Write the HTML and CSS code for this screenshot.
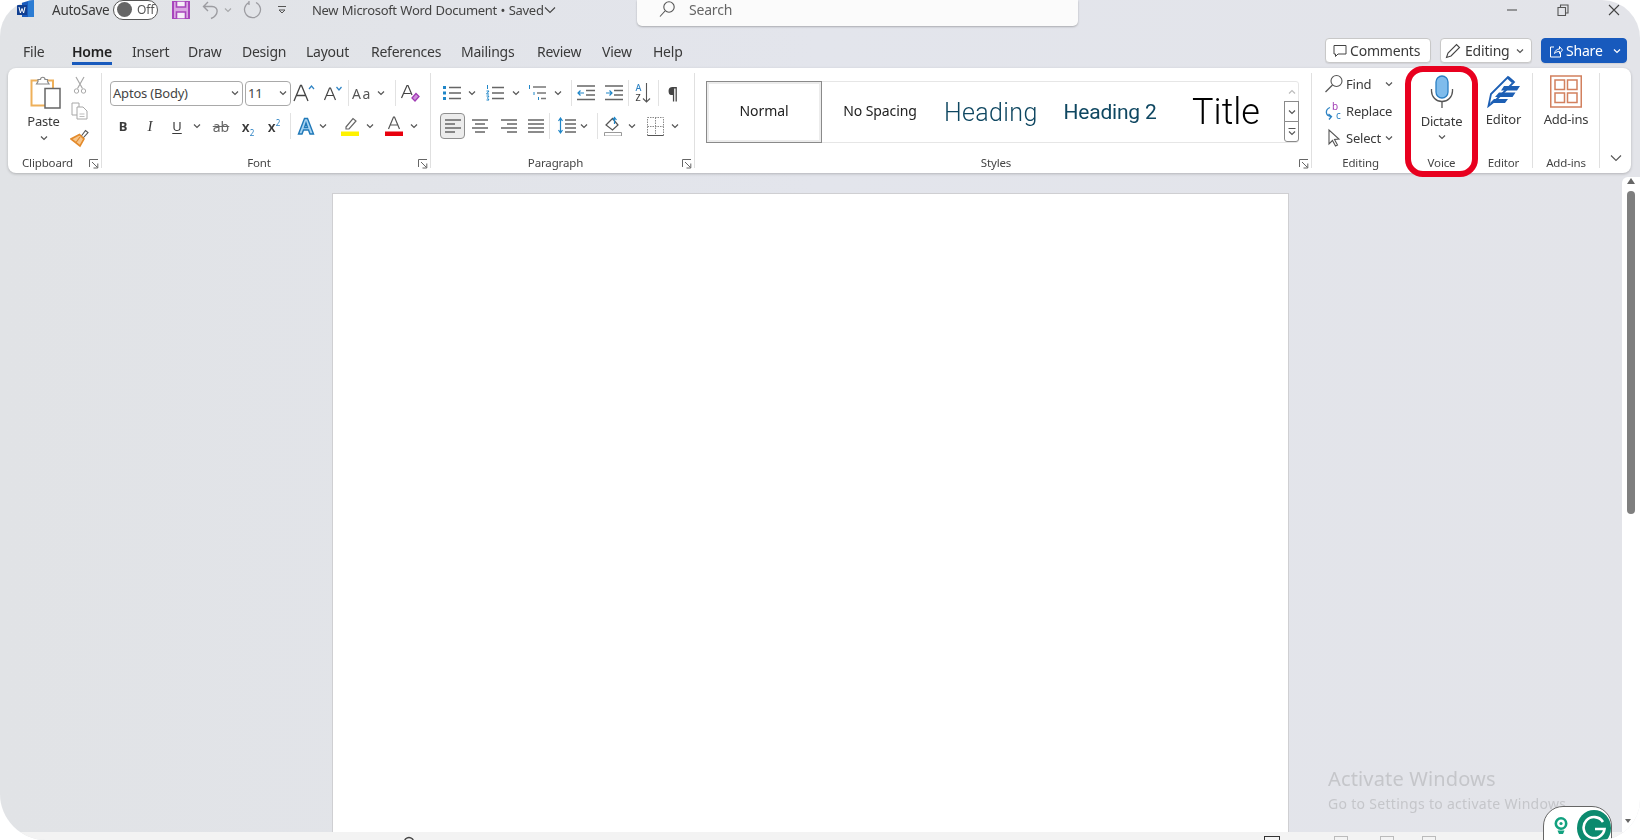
FILE: index.html
```html
<!DOCTYPE html>
<html lang="en">
<head>
<meta charset="utf-8">
<title>New Microsoft Word Document</title>
<link rel="stylesheet" href="styles.css">
</head>
<body>
<svg class="defs" width="0" height="0" aria-hidden="true">
  <symbol id="chev" viewBox="0 0 10 10"><path d="M2 3.5 5 6.5 8 3.5" fill="none" stroke="#555" stroke-width="1.2"/></symbol>
  <symbol id="launch" viewBox="0 0 10 10"><path d="M.5 8V.5H9M3 3 8.5 8.5M8.8 4.5V9H4.5" fill="none" stroke="#666" stroke-width="1"/></symbol>
  <symbol id="al" viewBox="0 0 18 16"><path d="M1 2H17M1 6H11M1 10H17M1 14H11" stroke="#666" stroke-width="1.4"/></symbol>
  <symbol id="ac" viewBox="0 0 18 16"><path d="M1 2H17M4 6H14M1 10H17M4 14H14" stroke="#666" stroke-width="1.4"/></symbol>
  <symbol id="ar" viewBox="0 0 18 16"><path d="M1 2H17M7 6H17M1 10H17M7 14H17" stroke="#666" stroke-width="1.4"/></symbol>
  <symbol id="aj" viewBox="0 0 18 16"><path d="M1 2H17M1 6H17M1 10H17M1 14H17" stroke="#666" stroke-width="1.4"/></symbol>
</svg>
<div class="app">
  <header class="titlebar">
    <div class="qat">
      <svg class="word" width="18" height="18" viewBox="0 0 18 18"><path d="M5 0H17V17H5z" fill="#185abd"/><path d="M11 0H17V17H11z" fill="#2b7cd3"/><path d="M0 5H10V15H0z" fill="#103f91"/><path d="M2 7 3.4 13 5 8.5 6.6 13 8 7" fill="none" stroke="#fff" stroke-width="1"/></svg>
      <span class="autosave">AutoSave</span>
      <span class="toggle"><i class="knob"></i><span class="off">Off</span></span>
      <svg class="save" width="18" height="18" viewBox="0 0 18 18"><path d="M1 0H17V18H1z" fill="#d9a6e2" stroke="#a845bc" stroke-width="2"/><path d="M4.500 0H13.500V6H4.500zM4.500 11H13.500V18H4.500z" fill="#f6eef8" stroke="#a845bc" stroke-width="1.600"/></svg>
      <svg class="undo" width="18" height="19" viewBox="0 0 18 19"><path d="M6 1 1.500 5.500 6 10M1.500 5.500H10C17 5.500 17 14 9 17.500" fill="none" stroke="#9c9ca1" stroke-width="1.400"/></svg>
      <svg class="undo-ch" width="10" height="10"><use href="#chev" opacity=".4"/></svg>
      <svg class="redo" width="19" height="18" viewBox="0 0 19 18"><path d="M13 1.500A8 8 0 1 1 6 1.500M6 0V4" fill="none" stroke="#9c9ca1" stroke-width="1.300"/></svg>
      <svg class="custom" width="10" height="10" viewBox="0 0 10 10"><path d="M1 1.500H9M2 5H8L5 8z" fill="none" stroke="#555" stroke-width="1"/></svg>
      <span class="doc-title">New Microsoft Word Document • Saved</span>
      <svg class="title-ch" width="14" height="14" viewBox="0 0 14 14"><path d="M2 4.500 7 9.500 12 4.500" fill="none" stroke="#444" stroke-width="1.100"/></svg>
    </div>
    <div class="search">
      <svg width="18" height="18" viewBox="0 0 18 18"><circle cx="11" cy="7" r="5.200" fill="none" stroke="#555" stroke-width="1.100"/><path d="M7 11 2 16.500" stroke="#555" stroke-width="1.100"/></svg>
      <span>Search</span>
    </div>
    <div class="winctl">
      <svg width="12" height="12" viewBox="0 0 12 12"><path d="M1 6H11" stroke="#555" stroke-width="1.100"/></svg>
      <svg width="12" height="12" viewBox="0 0 12 12"><path d="M1 3.500H8.500V11.500H1zM3.500 3.500V1H11V9H8.500" fill="none" stroke="#555" stroke-width="1.100"/></svg>
      <svg width="12" height="12" viewBox="0 0 12 12"><path d="M1 1 11 11M11 1 1 11" stroke="#444" stroke-width="1.100"/></svg>
    </div>
  </header>

  <nav class="tabsrow">
    <div class="tabs">
      <span class="tab t-file">File</span>
      <span class="tab active t-home">Home</span>
      <span class="tab t-insert">Insert</span>
      <span class="tab t-draw">Draw</span>
      <span class="tab t-design">Design</span>
      <span class="tab t-layout">Layout</span>
      <span class="tab t-refs">References</span>
      <span class="tab t-mail">Mailings</span>
      <span class="tab t-review">Review</span>
      <span class="tab t-view">View</span>
      <span class="tab t-help">Help</span>
    </div>
    <div class="actions">
      <span class="btn b-comments"><svg width="14" height="14" viewBox="0 0 14 14"><path d="M1 1.500H13V10H5L2.500 12.500V10H1z" fill="none" stroke="#444"/></svg>Comments</span>
      <span class="btn b-editing"><svg width="16" height="16" viewBox="0 0 16 16"><path d="M1.500 14.500 3 10 11.500 1.500 14.500 4.500 6 13z" fill="none" stroke="#444" stroke-width="1.100"/></svg>Editing<svg class="ch8" width="10" height="10"><use href="#chev"/></svg></span>
      <span class="btn b-share"><svg width="14" height="14" viewBox="0 0 14 14"><path d="M5 3H1.500V13H11.500V9M5.500 9.500C6 6.500 8 5 10.500 5V2.500L13.500 6 10.500 9.500V7.500C8.500 7.500 7 8 5.500 9.500Z" fill="none" stroke="#fff"/></svg>Share<svg class="ch-share" width="10" height="10" viewBox="0 0 10 10"><path d="M2 3.500 5 6.500 8 3.500" fill="none" stroke="#fff" stroke-width="1.200"/></svg></span>
    </div>
  </nav>

  <section class="ribbon">
    <div class="group g-clip">
      <div class="body clip-body">
        <div class="paste">
          <svg width="31" height="33" viewBox="0 0 31 33"><path d="M4 4.500H23V29.500H1.500V4.500z" fill="#fff" stroke="#eeb05a" stroke-width="2"/><path d="M8 5.500V3.500H10.500A2 2 0 0 1 15 3.500H17.500V5.500L19 8H6.500z" fill="#fff" stroke="#8a8a8a" stroke-width="1.200"/><path d="M15 12.500H30V32H15z" fill="#fff" stroke="#666" stroke-width="1.500"/></svg>
          <span class="paste-label">Paste</span>
          <svg class="paste-ch" width="10" height="10"><use href="#chev"/></svg>
        </div>
        <div class="clip-small">
          <svg width="14" height="18" viewBox="0 0 14 18"><path d="M3 1 9.500 12.500M11 1 4.500 12.500" stroke="#a8a8a8" stroke-width="1.200"/><circle cx="3.500" cy="15" r="2.200" fill="none" stroke="#a8a8a8"/><circle cx="10.500" cy="15" r="2.200" fill="none" stroke="#a8a8a8"/></svg>
          <svg width="18" height="18" viewBox="0 0 18 18"><path d="M1 1H8V13H1z" fill="#fff" stroke="#a8a8a8"/><path d="M6 5H12L16 9V17H6z" fill="#fff" stroke="#a8a8a8"/><path d="M8.500 12H13.500M8.500 14.500H13.500" stroke="#bdbdbd"/></svg>
          <svg width="20" height="20" viewBox="0 0 20 20"><path d="M11 8.500 15.500 2.500 18 4.500 13 10z" fill="#fff" stroke="#555" stroke-width="1.100"/><path d="M9.500 6.500 14 11 10 18 1 11z" fill="#f7c58a" stroke="#e38a2b" stroke-width="1.600"/><path d="M6 14.500 10 9" stroke="#e38a2b" stroke-width="1.200"/></svg>
        </div>
      </div>
      <div class="glabel"><span>Clipboard</span><svg width="10" height="10"><use href="#launch"/></svg></div>
    </div>

    <div class="group g-font">
      <div class="body">
        <div class="row pad8">
          <span class="select sel-font">Aptos (Body)<svg width="10" height="10"><use href="#chev"/></svg></span>
          <span class="select sel-size">11<svg width="10" height="10"><use href="#chev"/></svg></span>
          <span class="cell w26"><svg width="24" height="20" viewBox="0 0 24 20"><path d="M2 18 8.500 2.500H9.500L16 18M4.500 12.500H13.500" fill="none" stroke="#444" stroke-width="1.300"/><path d="M17 6 19.500 3 22 6" fill="none" stroke="#2e83c4" stroke-width="1.200"/></svg></span>
          <span class="cell w31"><svg width="20" height="18" viewBox="0 0 20 18"><path d="M1.500 16 6.500 4H7.500L12.500 16M3.500 11.500H10.500" fill="none" stroke="#444" stroke-width="1.200"/><path d="M13.500 3 16 6 18.500 3" fill="none" stroke="#2e83c4" stroke-width="1.200"/></svg></span>
          <i class="sep"></i>
          <span class="cell w26 aa">Aa</span>
          <span class="cell w12"><svg width="10" height="10"><use href="#chev"/></svg></span>
          <i class="sep ml8"></i>
          <span class="cell w28"><svg width="20" height="20" viewBox="0 0 20 20"><path d="M1.500 15 7 2.500H8L12 12M3.500 10.500H10.500" fill="none" stroke="#444" stroke-width="1.200"/><path d="M12 15 16 10.500 19 13.500 15 18z" fill="#d08fdc" stroke="#a03cb4" stroke-width="1.300"/></svg></span>
        </div>
        <div class="row row2 pad8">
          <span class="cell w26 tb">B</span>
          <span class="cell w28 ti">I</span>
          <span class="cell w26 tu">U</span>
          <span class="cell w14"><svg width="10" height="10"><use href="#chev"/></svg></span>
          <span class="cell w34 ts">ab</span>
          <span class="cell w20 tx"><span>x<sub>2</sub></span></span>
          <span class="cell w32 tx"><span>x<sup>2</sup></span></span>
          <i class="sep"></i>
          <span class="cell w24 ml3"><svg width="18" height="18" viewBox="0 0 18 18"><path d="M1.500 17 7.500 1.500H10.500L16.500 17H13L11.500 13H6.500L5 17zM7.500 10.500H10.500L9 6z" fill="#a8d4f2" stroke="#1f78b8" stroke-width="1.400"/></svg></span>
          <span class="cell w10"><svg width="10" height="10"><use href="#chev"/></svg></span>
          <span class="cell w28 ml8"><svg width="18" height="20" viewBox="0 0 18 20"><path d="M5 11 12 2.500 15 5 8 13H5z" fill="#fff" stroke="#666" stroke-width="1.200"/><path d="M0 15.500H18V20H0z" fill="#fff200"/></svg></span>
          <span class="cell w12"><svg width="10" height="10"><use href="#chev"/></svg></span>
          <span class="cell w28 ml4"><svg width="18" height="20" viewBox="0 0 18 20"><path d="M3.500 13 8.500 1H9.500L14.500 13M5.500 9H12.500" fill="none" stroke="#555" stroke-width="1.200"/><path d="M0 15.500H18V20H0z" fill="#e8000d"/></svg></span>
          <span class="cell w12"><svg width="10" height="10"><use href="#chev"/></svg></span>
        </div>
      </div>
      <div class="glabel"><span>Font</span><svg width="10" height="10"><use href="#launch"/></svg></div>
    </div>

    <div class="group g-para">
      <div class="body">
        <div class="row pad9">
          <span class="cell w24"><svg width="18" height="16" viewBox="0 0 18 16"><path d="M0 1H3V4H0zM0 6.500H3V9.500H0zM0 12H3V15H0z" fill="#1f86c8"/><path d="M6 2.500H18M6 8H18M6 13.500H18" stroke="#666" stroke-width="1.400"/></svg></span>
          <span class="cell w16"><svg width="10" height="10"><use href="#chev"/></svg></span>
          <span class="cell w30"><svg width="18" height="16" viewBox="0 0 18 16"><path d="M1.500 0V4M.5 6H3L.5 9H3M.5 11H3L1.500 13 3 15H.5" fill="none" stroke="#1f86c8"/><path d="M6 2.500H18M6 8H18M6 13.500H18" stroke="#666" stroke-width="1.400"/></svg></span>
          <span class="cell w12"><svg width="10" height="10"><use href="#chev"/></svg></span>
          <span class="cell w30"><svg width="18" height="16" viewBox="0 0 18 16"><path d="M1.500 0V4M6 7V10M10.500 12V15" stroke="#1f86c8"/><path d="M5 2H18M9 8H18M13 13.500H18" stroke="#777" stroke-width="1.300"/></svg></span>
          <span class="cell w12"><svg width="10" height="10"><use href="#chev"/></svg></span>
          <i class="sep ml7"></i>
          <span class="cell w28"><svg width="18" height="16" viewBox="0 0 18 16"><path d="M0 1H18M9 5.500H18M9 10H18M0 14.500H18" stroke="#666" stroke-width="1.300"/><path d="M7 8H1M3.500 5.500 1 8 3.500 10.500" fill="none" stroke="#1f86c8" stroke-width="1.200"/></svg></span>
          <span class="cell w28"><svg width="18" height="16" viewBox="0 0 18 16"><path d="M0 1H18M9 5.500H18M9 10H18M0 14.500H18" stroke="#666" stroke-width="1.300"/><path d="M1 8H7M4.500 5.500 7 8 4.500 10.500" fill="none" stroke="#1f86c8" stroke-width="1.200"/></svg></span>
          <i class="sep"></i>
          <span class="cell w29 sort"><b class="az"><em>A</em><span>Z</span></b><svg width="9" height="20" viewBox="0 0 9 20"><path d="M4.500 0V19M1 15.500 4.500 19 8 15.500" fill="none" stroke="#555" stroke-width="1.100"/></svg></span>
          <i class="sep"></i>
          <span class="cell w28 pil">¶</span>
        </div>
        <div class="row row2 pad9">
          <span class="cell w25 pressed"><svg width="18" height="16"><use href="#al"/></svg></span>
          <span class="cell w30"><svg width="18" height="16"><use href="#ac"/></svg></span>
          <span class="cell w27"><svg width="18" height="16"><use href="#ar"/></svg></span>
          <span class="cell w27"><svg width="18" height="16"><use href="#aj"/></svg></span>
          <i class="sep"></i>
          <span class="cell w24 ml5"><svg width="18" height="18" viewBox="0 0 18 18"><path d="M2.500 1V16M.5 4 2.500 1 4.500 4M.5 13 2.500 16 4.500 13" fill="none" stroke="#1f86c8" stroke-width="1.200"/><path d="M7 3H18M7 7H18M7 11H18M7 15H18" stroke="#666" stroke-width="1.300"/></svg></span>
          <span class="cell w10"><svg width="10" height="10"><use href="#chev"/></svg></span>
          <i class="sep ml8"></i>
          <span class="cell w30"><svg width="18" height="20" viewBox="0 0 18 20"><path d="M2 9 8.500 2.500 14 9 8.500 14z" fill="#fff" stroke="#555" stroke-width="1.200"/><path d="M10.500 2V8M8.500 4 10.500 1.500 12.500 4" fill="none" stroke="#1f86c8" stroke-width="1.200"/><path d="M.5 16.500H17.500V20H.5z" fill="#fff" stroke="#999"/></svg></span>
          <span class="cell w8"><svg width="10" height="10"><use href="#chev"/></svg></span>
          <span class="cell w30 ml4"><svg width="17" height="19" viewBox="0 0 17 19"><path d="M.5 .5H16.500V18.500H.5zM8.500 .5V18.500M.5 9.500H16.500" fill="none" stroke="#8a8a8a" stroke-dasharray="1.500 1"/><path d="M.5 18.500H16.500" stroke="#555"/></svg></span>
          <span class="cell w10"><svg width="10" height="10"><use href="#chev"/></svg></span>
        </div>
      </div>
      <div class="glabel"><span>Paragraph</span><svg width="10" height="10"><use href="#launch"/></svg></div>
    </div>

    <div class="group g-styles">
      <div class="body styles-body">
        <div class="gallery">
          <div class="style selected">Normal</div>
          <div class="style plain">No Spacing</div>
          <div class="style h1">Heading 1</div>
          <div class="style h2">Heading 2</div>
          <div class="style title">Title</div>
          <div class="gscroll">
            <span class="gs-up"><svg width="10" height="10" viewBox="0 0 10 10"><path d="M2 6.500 5 3.500 8 6.500" fill="none" stroke="#bbb" stroke-width="1.200"/></svg></span>
            <span class="gs-btn"><svg width="10" height="10"><use href="#chev"/></svg></span>
            <span class="gs-btn"><svg width="10" height="10" viewBox="0 0 10 10"><path d="M1.500 1.500H8.500M2 4.500 5 7.500 8 4.500" fill="none" stroke="#555" stroke-width="1.100"/></svg></span>
          </div>
        </div>
      </div>
      <div class="glabel"><span>Styles</span><svg width="10" height="10"><use href="#launch"/></svg></div>
    </div>

    <div class="group g-editing">
      <div class="body edit-body">
        <div class="edit-row"><svg width="20" height="20" viewBox="0 0 20 20"><circle cx="12.500" cy="7" r="5.500" fill="none" stroke="#555" stroke-width="1.100"/><path d="M8.500 11 1.500 18" stroke="#555" stroke-width="1.300"/></svg><span>Find</span><svg class="find-ch" width="10" height="10"><use href="#chev"/></svg></div>
        <div class="edit-row"><svg class="rep" width="20" height="20" viewBox="0 0 20 20"><path d="M6 6.500C1 8.500 1 15 7 15.500M4.500 13 7.500 15.500 5 18.500" fill="none" stroke="#2e83c4" stroke-width="1.300"/><text x="8" y="9" class="rep-b">b</text><text x="12" y="18" class="rep-c">c</text></svg><span>Replace</span></div>
        <div class="edit-row"><svg width="20" height="20" viewBox="0 0 20 20"><path d="M5 2 5 16 8.500 12.500 11.500 18 13.500 17 10.500 11.500 15 11z" fill="#fff" stroke="#555" stroke-width="1.100"/></svg><span>Select</span><svg class="sel-ch" width="10" height="10"><use href="#chev"/></svg></div>
      </div>
      <div class="glabel bare shift-r"><span>Editing</span></div>
    </div>

    <div class="group g-voice">
      <div class="body big">
        <svg width="24" height="33" viewBox="0 0 24 33"><rect x="6" y="1" width="12" height="22" rx="6" fill="#7fbcec" stroke="#2a7fc4" stroke-width="1.300"/><path d="M1.500 14V16A10.500 10.500 0 0 0 22.500 16V14" fill="none" stroke="#555" stroke-width="1.300"/><path d="M12 26.500V33" stroke="#555" stroke-width="1.300"/></svg>
        <span class="big-label dict">Dictate</span>
        <svg class="dict-ch" width="10" height="10"><use href="#chev"/></svg>
      </div>
      <div class="glabel bare"><span>Voice</span></div>
      <div class="highlight"></div>
    </div>

    <div class="group g-editor">
      <div class="body big">
        <svg width="34" height="33" viewBox="0 0 34 33"><path d="M1.500 31 4 19 21 2 27 7 9 25z" fill="#fff" stroke="#1d5fb4" stroke-width="1.800"/><path d="M22 1.500 27 6 25 8 20 3.500z" fill="#1d5fb4"/><path d="M17 11H33L30 15.500H14zM12 17.500H28.500L25.500 22H8zM7 24H21L18 28H3z" fill="#1d5fb4"/></svg>
        <span class="big-label">Editor</span>
      </div>
      <div class="glabel bare"><span>Editor</span></div>
    </div>

    <div class="group g-addins">
      <div class="body big">
        <svg width="32" height="33" viewBox="0 0 32 33"><path d="M.75 1H31.250V32H.75z" fill="none" stroke="#d2805e" stroke-width="1.500"/><path d="M5 5H14.500V14.500H5zM17.500 5H27V14.500H17.500zM5 18H14.500V27.500H5zM17.500 18H27V27.500H17.500z" fill="#fff" stroke="#d2805e" stroke-width="1.500"/></svg>
        <span class="big-label">Add-ins</span>
      </div>
      <div class="glabel bare"><span>Add-ins</span></div>
    </div>

    <div class="collapse"><svg width="14" height="14" viewBox="0 0 14 14"><path d="M2 4.500 7 9.500 12 4.500" fill="none" stroke="#555" stroke-width="1.100"/></svg></div>
  </section>

  <main class="workspace">
    <div class="docarea"><div class="page"></div></div>
    <aside class="vscroll">
      <svg width="10" height="8" viewBox="0 0 10 8"><path d="M1 7 5 1 9 7z" fill="#666"/></svg>
      <div class="thumb"></div>
      <svg class="v-down" width="8" height="6" viewBox="0 0 8 6"><path d="M1 1 4 5 7 1z" fill="#666"/></svg>
    </aside>
  </main>

  <footer class="status">
    <svg class="st-gear" width="14" height="14" viewBox="0 0 14 14"><circle cx="7" cy="7" r="4.500" fill="none" stroke="#444" stroke-width="1.500"/></svg>
    <i class="st-i st-focus"></i>
    <i class="st-i st-a"></i>
    <i class="st-i st-b"></i>
    <i class="st-i st-c"></i>
  </footer>

  <div class="activate">
    <div class="act-1">Activate Windows</div>
    <div class="act-2">Go to Settings to activate Windows.</div>
  </div>

  <div class="grammarly">
    <svg class="g-bulb" width="14" height="18" viewBox="0 0 14 18"><circle cx="7" cy="6.500" r="5.200" fill="#fff" stroke="#12a17f" stroke-width="2.600"/><circle cx="7" cy="6.500" r="1.600" fill="#12a17f"/><path d="M3.500 13.500 5 17H9L10.500 13.500z" fill="#12a17f"/></svg>
    <span class="g-badge"><svg width="26" height="26" viewBox="0 0 26 26"><path d="M22 7A10.500 10.500 0 1 0 23.500 14H14" fill="none" stroke="#fff" stroke-width="2.600"/></svg></span>
  </div>
</div>
</body>
</html>
```
FILE: styles.css
```css
* { box-sizing: border-box; }
html, body { margin: 0; padding: 0; background: #fff; }
body { width: 1640px; height: 840px; overflow: hidden; font-family: "Noto Sans", "Open Sans", sans-serif; color: #3a3a3a; }
.defs { position: absolute; }
svg { display: block; flex: none; }

.app {
  position: relative;
  width: 1640px; height: 840px;
  display: flex; flex-direction: column;
  overflow: hidden;
  background: linear-gradient(90deg, #e1e3e6 0%, #e3e5ec 50%, #e3e4e9 100%);
  border-radius: 36px 38px 40px 46px;
  filter: blur(.3px);
}

/* title bar */
.titlebar { height: 33px; flex: none; display: flex; align-items: flex-start; overflow: visible; }
.qat { width: 637px; height: 20px; flex: none; display: flex; align-items: center; font-size: 13.5px; letter-spacing: -.25px; }
.word { margin: -2px 0 0 17px; }
.autosave { margin-left: 17px; width: 61px; }
.toggle { width: 45px; height: 20px; border: 1.3px solid #555; border-radius: 10px; background: #fff; display: flex; align-items: center; padding-left: 3px; margin-top: -1px; }
.knob { width: 15px; height: 15px; border-radius: 50%; background: #666; }
.off { font-size: 12px; margin-left: 5px; color: #555; letter-spacing: 0; }
.save { margin-left: 14px; }
.undo { margin-left: 12px; }
.undo-ch { margin-left: 3px; }
.redo { margin-left: 10px; }
.custom { margin-left: 15px; }
.doc-title { margin-left: 25px; width: 231px; white-space: nowrap; color: #444; font-size: 13px; letter-spacing: -.3px; word-spacing: .5px; }
.title-ch { margin-left: 0; }
.search { width: 441px; height: 26px; flex: none; background: #fbfbfb; border-radius: 0 0 5px 5px; box-shadow: 0 1px 2px rgba(0,0,0,.25); display: flex; align-items: center; padding: 0 0 8px 21px; font-size: 14px; color: #666; gap: 13px; letter-spacing: -.2px; }
.winctl { margin-left: auto; width: 134px; padding: 4px 20px 0 0; display: flex; justify-content: space-between; }

/* tabs row */
.tabsrow { height: 35px; flex: none; display: flex; justify-content: space-between; }
.tabs { display: flex; font-size: 14px; letter-spacing: -.25px; color: #3a3a3a; padding-left: 23px; }
.tab { height: 32px; padding-top: 9px; line-height: 20px; white-space: nowrap; flex: none; }
.t-file { width: 49px; } .t-home { width: 60px; } .t-insert { width: 56px; } .t-draw { width: 54px; }
.t-design { width: 64px; } .t-layout { width: 65px; } .t-refs { width: 90px; } .t-mail { width: 76px; }
.t-review { width: 65px; } .t-view { width: 51px; } .t-help { width: 50px; }
.active { font-weight: 600; color: #222; position: relative; }
.active::after { content: ""; position: absolute; left: 0; width: 40px; top: 29px; height: 3px; background: #185abd; }
.actions { display: flex; gap: 9px; padding: 5px 13px 0 0; font-size: 14px; letter-spacing: -.2px; }
.btn { height: 25px; border-radius: 4px; background: #fff; border: 1px solid #c8c8c8; display: flex; align-items: center; gap: 4px; color: #3a3a3a; white-space: nowrap; box-shadow: 0 1px 1px rgba(0,0,0,.08); }
.b-comments { width: 106px; padding-left: 7px; gap: 3px; }
.b-editing { width: 92px; padding-left: 4px; }
.b-share { width: 86px; padding-left: 7px; background: #185abd; border-color: #185abd; color: #fff; gap: 3px; }
.ch8 { margin-left: 1px; }
.ch-share { margin-left: auto; margin-right: 4px; }

/* ribbon */
.ribbon { height: 105px; flex: none; margin: 0 9px 0 8px; background: #fff; border-radius: 8px; box-shadow: 0 1px 3px rgba(0,0,0,.22); padding: 5px 0; display: flex; position: relative; z-index: 2; font-size: 13px; }
.group { height: 95px; flex: none; display: flex; flex-direction: column; position: relative; border-right: 1px solid #e0e0e0; }
.body { flex: 1; min-height: 0; }
.glabel { height: 12px; position: relative; top: 1px; display: flex; align-items: center; font-size: 11.5px; letter-spacing: -.15px; color: #444; padding-right: 2px; line-height: 12px; }
.glabel span { flex: 1; text-align: center; padding-right: 2px; }
.glabel svg { margin-top: 1px; }
.glabel.bare { padding-right: 0; }
.glabel.bare span { padding-right: 0; }
.glabel.shift-r { padding-left: 4px; }
.g-clip { width: 94px; } .g-font { width: 329px; } .g-para { width: 264px; } .g-styles { width: 617px; }
.g-editing { width: 93px; border-right: 0; } .g-voice { width: 73px; border-right: 0; } .g-editor { width: 55px; padding-right: 3px; } .g-addins { width: 67px; }
.collapse { flex: 1; display: flex; align-items: flex-end; justify-content: center; padding-bottom: 3px; }

.clip-body { display: flex; padding: 3px 0 0 10px; }
.paste { width: 52px; display: flex; flex-direction: column; align-items: center; padding-left: 2px; }
.paste-label { font-size: 13px; letter-spacing: -.2px; line-height: 16px; margin-top: 4px; margin-left: -3px; }
.paste-ch { margin-top: 4px; margin-left: -3px; }
.clip-small { width: 20px; display: flex; flex-direction: column; align-items: center; gap: 8px; }

.row { display: flex; height: 26px; align-items: center; }
.body > .row:first-child { margin-top: 7px; }
.row2 { margin-top: 7px; }
.pad8 { padding-left: 8px; } .pad9 { padding-left: 9px; }
.cell { display: flex; align-items: center; justify-content: center; height: 26px; flex: none; font-size: 13px; }
.w8 { width: 8px; } .w10 { width: 10px; } .w12 { width: 12px; } .w14 { width: 14px; } .w16 { width: 16px; } .w20 { width: 20px; }
.w24 { width: 24px; } .w25 { width: 25px; } .w26 { width: 26px; } .w27 { width: 27px; } .w28 { width: 28px; } .w29 { width: 29px; }
.w30 { width: 30px; } .w31 { width: 31px; } .w32 { width: 32px; } .w34 { width: 34px; }
.ml3 { margin-left: 3px; } .ml4 { margin-left: 4px; } .ml5 { margin-left: 5px; } .ml7 { margin-left: 7px; } .ml8 { margin-left: 8px; }
.sep { width: 1px; height: 26px; background: #e2e2e2; flex: none; }
.select { height: 25px; background: #fff; border: 1px solid #a9a9a9; border-radius: 4px; display: flex; align-items: center; justify-content: space-between; padding: 0 2px 0 2px; font-size: 13px; letter-spacing: -.2px; color: #444; flex: none; }
.sel-font { width: 133px; margin-right: 2px; }
.sel-size { width: 46px; }
.aa { letter-spacing: 1.5px; font-size: 14px; color: #555; }
.tb { font-weight: 700; font-size: 13px; }
.ti { font-style: italic; font-family: "Liberation Serif", serif; font-size: 15px; }
.tu { text-decoration: underline; text-underline-offset: 2px; }
.ts { text-decoration: line-through; font-size: 14px; color: #666; }
.tx { font-weight: 600; font-size: 14px; }
.tx sub, .tx sup { font-size: 8px; color: #2e83c4; line-height: 0; font-weight: 400; }
.sort { gap: 1px; }
.az { display: flex; flex-direction: column; font-size: 9px; line-height: 10px; font-weight: 500; color: #444; }
.az em { font-style: normal; color: #2e83c4; }
.pil { font-size: 16px; font-weight: 700; color: #444; }
.pressed { height: 26px; border: 1px solid #8f8f8f; border-radius: 4px; background: #ececec; }

.styles-body { padding: 8px 0 0 11px; }
.gallery { width: 593px; height: 62px; border: 1px solid #e6e6e6; border-radius: 3px; display: flex; position: relative; }
.style { width: 116px; height: 60px; flex: none; display: flex; align-items: center; justify-content: center; font-size: 14px; letter-spacing: -.1px; color: #222; overflow: hidden; white-space: nowrap; }
.plain { padding-bottom: 3px; }
.selected { border: 1px solid #8a8a8a; box-shadow: inset 0 0 0 2px #ececec; margin: -1px 0 -1px -1px; height: 62px; padding-bottom: 3px; }
.h1 { width: 107px; margin-right: 7px; font-family: Roboto, sans-serif; font-size: 25px; font-weight: 300; color: #0f4761; justify-content: flex-start; padding-left: 6px; letter-spacing: .35px; }
.h2 { font-family: Roboto, sans-serif; font-size: 21px; color: #0f4761; letter-spacing: -.2px; }
.title { font-family: Roboto, sans-serif; font-size: 36px; font-weight: 300; color: #000; width: 116px; letter-spacing: 0; }
.gscroll { width: 15px; flex: none; display: flex; flex-direction: column; margin: -1px -1px -1px 0; }
.gscroll span { height: 21px; display: flex; align-items: center; justify-content: center; }
.gs-btn { border: 1px solid #8a8a8a; margin-top: -1px; background: #fff; }
.gs-btn:last-child { border-radius: 0 0 3px 3px; }

.edit-body { padding-left: 12px; display: flex; flex-direction: column; gap: 5px; font-size: 13px; letter-spacing: -.2px; }
.edit-row { height: 22px; display: flex; align-items: center; gap: 2px; }
.rep { overflow: visible; }
.rep-b { font-size: 10px; fill: #a03cb4; font-family: "Noto Sans", sans-serif; }
.rep-c { font-size: 10px; fill: #2e83c4; font-family: "Noto Sans", sans-serif; }
.find-ch { margin-left: 11px; }
.sel-ch { margin-left: 1px; }

.big { display: flex; flex-direction: column; align-items: center; padding-top: 2px; }
.big-label { font-size: 13px; letter-spacing: -.2px; line-height: 16px; margin-top: 3px; }
.dict { margin-top: 5px; }
.dict-ch { margin-top: 3px; }
.highlight { position: absolute; left: 0; top: -7px; width: 73px; height: 111px; border: 6px solid #e8001f; border-radius: 18px; }

/* workspace */
.workspace { flex: 1; min-height: 0; display: flex; }
.docarea { flex: 1; padding: 20px 0 0 332px; }
.page { width: 957px; height: 100%; background: #fff; border: 1px solid #cfcfd2; border-bottom: 0; }
.vscroll { width: 18px; flex: none; margin-top: 4px; background: #fff; border-radius: 6px 0 0 0; display: flex; flex-direction: column; align-items: center; }
.thumb { width: 8px; height: 323px; background: #7f7f7f; border-radius: 4px; margin-top: 6px; }
.v-down { margin-top: auto; margin-bottom: 8px; margin-right: 6px; }

/* status bar */
.status { height: 8px; flex: none; background: #f3f3f3; display: flex; overflow: hidden; padding: 4px 0 0 402px; }
.st-gear { margin-top: -1px; }
.st-i { display: block; width: 14px; height: 10px; border: 1px solid #777; flex: none; }
.st-focus { margin-left: 848px; width: 16px; border-color: #333; }
.st-a { margin-left: 54px; border-color: #bbb; }
.st-b { margin-left: 32px; border-color: #bbb; }
.st-c { margin-left: 28px; border-color: #bbb; }

/* overlays */
.activate { position: absolute; left: 1328px; top: 767px; color: #c5c6ca; white-space: nowrap; }
.act-1 { font-size: 20px; line-height: 24px; letter-spacing: .15px; }
.act-2 { font-size: 14px; line-height: 18px; margin-top: 4px; letter-spacing: .3px; }
.grammarly { position: absolute; left: 1543px; top: 806px; width: 69px; height: 50px; background: #fff; border: 1px solid #666; border-radius: 20px 20px 0 0; display: flex; align-items: flex-start; padding: 3px 0 0 10px; gap: 9px; z-index: 3; }
.g-bulb { margin-top: 7px; }
.g-badge { width: 36px; height: 36px; border-radius: 50%; background: #0b8a6e; display: flex; align-items: center; justify-content: center; }
```
